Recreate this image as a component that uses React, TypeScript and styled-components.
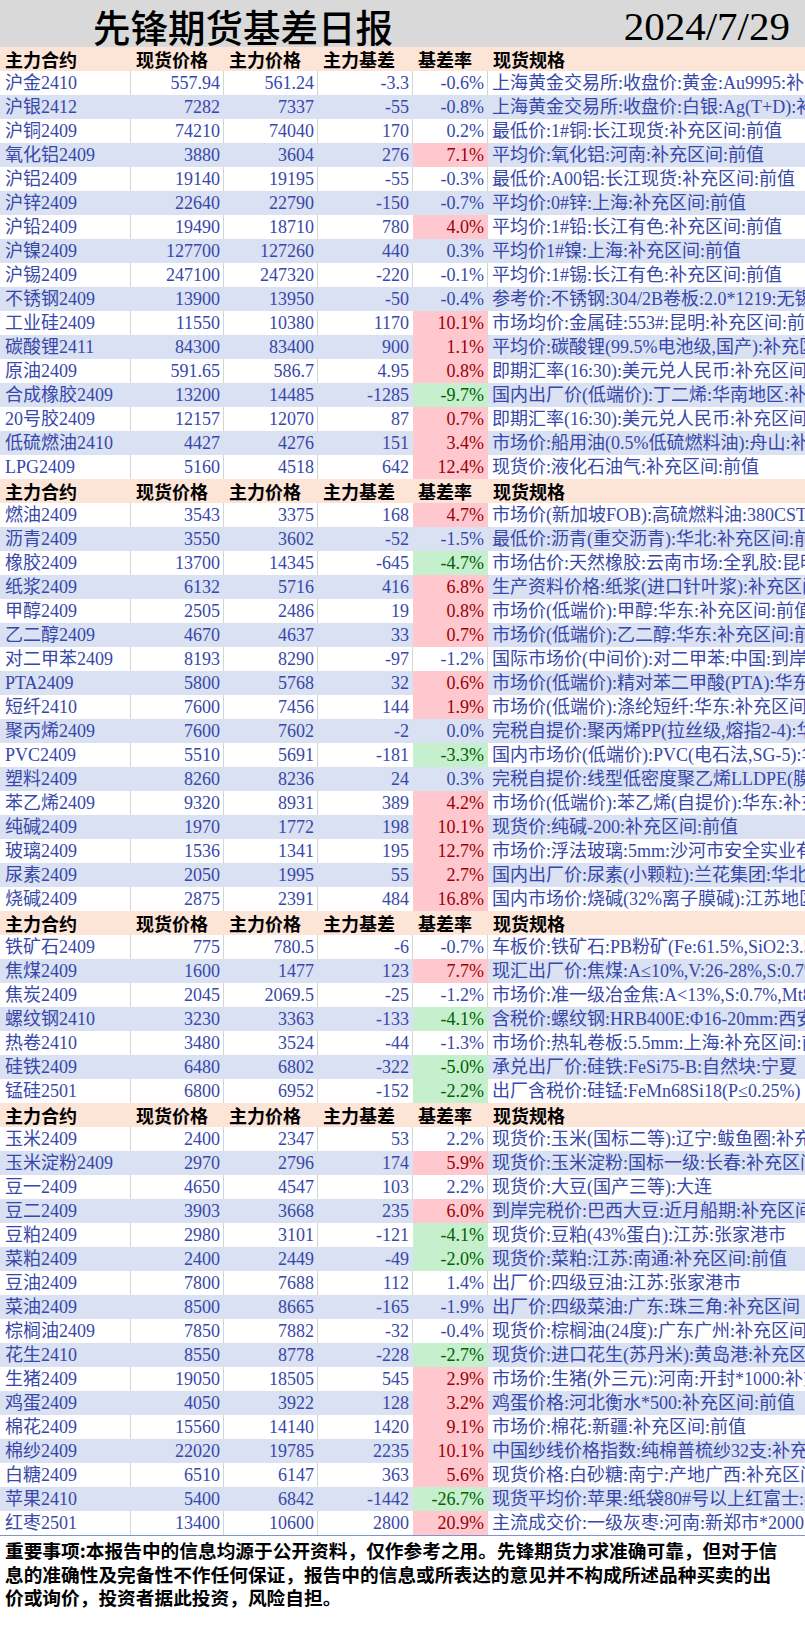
import React from 'react';
import styled, { createGlobalStyle } from 'styled-components';

const GlobalStyle = createGlobalStyle`
  html, body {
    margin: 0;
    padding: 0;
    background: #ffffff;
  }
`;

type Mark = 'up' | 'down' | '';
type Row = [string, string, string, string, string, Mark, string];

const GROUPS: Row[][] = [
  [
    ['沪金2410', '557.94', '561.24', '-3.3', '-0.6%', '', '上海黄金交易所:收盘价:黄金:Au9995:补充区间:前值'],
    ['沪银2412', '7282', '7337', '-55', '-0.8%', '', '上海黄金交易所:收盘价:白银:Ag(T+D):补充区间:前值'],
    ['沪铜2409', '74210', '74040', '170', '0.2%', '', '最低价:1#铜:长江现货:补充区间:前值'],
    ['氧化铝2409', '3880', '3604', '276', '7.1%', 'up', '平均价:氧化铝:河南:补充区间:前值'],
    ['沪铝2409', '19140', '19195', '-55', '-0.3%', '', '最低价:A00铝:长江现货:补充区间:前值'],
    ['沪锌2409', '22640', '22790', '-150', '-0.7%', '', '平均价:0#锌:上海:补充区间:前值'],
    ['沪铅2409', '19490', '18710', '780', '4.0%', 'up', '平均价:1#铅:长江有色:补充区间:前值'],
    ['沪镍2409', '127700', '127260', '440', '0.3%', '', '平均价1#镍:上海:补充区间:前值'],
    ['沪锡2409', '247100', '247320', '-220', '-0.1%', '', '平均价:1#锡:长江有色:补充区间:前值'],
    ['不锈钢2409', '13900', '13950', '-50', '-0.4%', '', '参考价:不锈钢:304/2B卷板:2.0*1219:无锡:补充区间'],
    ['工业硅2409', '11550', '10380', '1170', '10.1%', 'up', '市场均价:金属硅:553#:昆明:补充区间:前值'],
    ['碳酸锂2411', '84300', '83400', '900', '1.1%', 'up', '平均价:碳酸锂(99.5%电池级,国产):补充区间:前值'],
    ['原油2409', '591.65', '586.7', '4.95', '0.8%', 'up', '即期汇率(16:30):美元兑人民币:补充区间:前值'],
    ['合成橡胶2409', '13200', '14485', '-1285', '-9.7%', 'down', '国内出厂价(低端价):丁二烯:华南地区:补充区间'],
    ['20号胶2409', '12157', '12070', '87', '0.7%', 'up', '即期汇率(16:30):美元兑人民币:补充区间:前值'],
    ['低硫燃油2410', '4427', '4276', '151', '3.4%', 'up', '市场价:船用油(0.5%低硫燃料油):舟山:补充区间'],
    ['LPG2409', '5160', '4518', '642', '12.4%', 'up', '现货价:液化石油气:补充区间:前值'],
  ],
  [
    ['燃油2409', '3543', '3375', '168', '4.7%', 'up', '市场价(新加坡FOB):高硫燃料油:380CST:补充区间'],
    ['沥青2409', '3550', '3602', '-52', '-1.5%', '', '最低价:沥青(重交沥青):华北:补充区间:前值'],
    ['橡胶2409', '13700', '14345', '-645', '-4.7%', 'down', '市场估价:天然橡胶:云南市场:全乳胶:昆明'],
    ['纸浆2409', '6132', '5716', '416', '6.8%', 'up', '生产资料价格:纸浆(进口针叶浆):补充区间:前值'],
    ['甲醇2409', '2505', '2486', '19', '0.8%', 'up', '市场价(低端价):甲醇:华东:补充区间:前值'],
    ['乙二醇2409', '4670', '4637', '33', '0.7%', 'up', '市场价(低端价):乙二醇:华东:补充区间:前值'],
    ['对二甲苯2409', '8193', '8290', '-97', '-1.2%', '', '国际市场价(中间价):对二甲苯:中国:到岸价'],
    ['PTA2409', '5800', '5768', '32', '0.6%', 'up', '市场价(低端价):精对苯二甲酸(PTA):华东'],
    ['短纤2410', '7600', '7456', '144', '1.9%', 'up', '市场价(低端价):涤纶短纤:华东:补充区间'],
    ['聚丙烯2409', '7600', '7602', '-2', '0.0%', '', '完税自提价:聚丙烯PP(拉丝级,熔指2-4):华东'],
    ['PVC2409', '5510', '5691', '-181', '-3.3%', 'down', '国内市场价(低端价):PVC(电石法,SG-5):华东'],
    ['塑料2409', '8260', '8236', '24', '0.3%', '', '完税自提价:线型低密度聚乙烯LLDPE(膜级)'],
    ['苯乙烯2409', '9320', '8931', '389', '4.2%', 'up', '市场价(低端价):苯乙烯(自提价):华东:补充区间'],
    ['纯碱2409', '1970', '1772', '198', '10.1%', 'up', '现货价:纯碱-200:补充区间:前值'],
    ['玻璃2409', '1536', '1341', '195', '12.7%', 'up', '市场价:浮法玻璃:5mm:沙河市安全实业有限公司'],
    ['尿素2409', '2050', '1995', '55', '2.7%', 'up', '国内出厂价:尿素(小颗粒):兰花集团:华北'],
    ['烧碱2409', '2875', '2391', '484', '16.8%', 'up', '国内市场价:烧碱(32%离子膜碱):江苏地区'],
  ],
  [
    ['铁矿石2409', '775', '780.5', '-6', '-0.7%', '', '车板价:铁矿石:PB粉矿(Fe:61.5%,SiO2:3.5%)'],
    ['焦煤2409', '1600', '1477', '123', '7.7%', 'up', '现汇出厂价:焦煤:A≤10%,V:26-28%,S:0.7%'],
    ['焦炭2409', '2045', '2069.5', '-25', '-1.2%', '', '市场价:准一级冶金焦:A<13%,S:0.7%,Mt8%'],
    ['螺纹钢2410', '3230', '3363', '-133', '-4.1%', 'down', '含税价:螺纹钢:HRB400E:Φ16-20mm:西安'],
    ['热卷2410', '3480', '3524', '-44', '-1.3%', '', '市场价:热轧卷板:5.5mm:上海:补充区间:前值'],
    ['硅铁2409', '6480', '6802', '-322', '-5.0%', 'down', '承兑出厂价:硅铁:FeSi75-B:自然块:宁夏'],
    ['锰硅2501', '6800', '6952', '-152', '-2.2%', 'down', '出厂含税价:硅锰:FeMn68Si18(P≤0.25%)'],
  ],
  [
    ['玉米2409', '2400', '2347', '53', '2.2%', '', '现货价:玉米(国标二等):辽宁:鲅鱼圈:补充区间'],
    ['玉米淀粉2409', '2970', '2796', '174', '5.9%', 'up', '现货价:玉米淀粉:国标一级:长春:补充区间'],
    ['豆一2409', '4650', '4547', '103', '2.2%', '', '现货价:大豆(国产三等):大连'],
    ['豆二2409', '3903', '3668', '235', '6.0%', 'up', '到岸完税价:巴西大豆:近月船期:补充区间'],
    ['豆粕2409', '2980', '3101', '-121', '-4.1%', 'down', '现货价:豆粕(43%蛋白):江苏:张家港市'],
    ['菜粕2409', '2400', '2449', '-49', '-2.0%', 'down', '现货价:菜粕:江苏:南通:补充区间:前值'],
    ['豆油2409', '7800', '7688', '112', '1.4%', '', '出厂价:四级豆油:江苏:张家港市'],
    ['菜油2409', '8500', '8665', '-165', '-1.9%', '', '出厂价:四级菜油:广东:珠三角:补充区间'],
    ['棕榈油2409', '7850', '7882', '-32', '-0.4%', '', '现货价:棕榈油(24度):广东广州:补充区间'],
    ['花生2410', '8550', '8778', '-228', '-2.7%', 'down', '现货价:进口花生(苏丹米):黄岛港:补充区间'],
    ['生猪2409', '19050', '18505', '545', '2.9%', 'up', '市场价:生猪(外三元):河南:开封*1000:补充区间'],
    ['鸡蛋2409', '4050', '3922', '128', '3.2%', 'up', '鸡蛋价格:河北衡水*500:补充区间:前值'],
    ['棉花2409', '15560', '14140', '1420', '9.1%', 'up', '市场价:棉花:新疆:补充区间:前值'],
    ['棉纱2409', '22020', '19785', '2235', '10.1%', 'up', '中国纱线价格指数:纯棉普梳纱32支:补充区间'],
    ['白糖2409', '6510', '6147', '363', '5.6%', 'up', '现货价格:白砂糖:南宁:产地广西:补充区间'],
    ['苹果2410', '5400', '6842', '-1442', '-26.7%', 'down', '现货平均价:苹果:纸袋80#号以上红富士:栖霞'],
    ['红枣2501', '13400', '10600', '2800', '20.9%', 'up', '主流成交价:一级灰枣:河南:新郑市*2000:补充区间'],
  ],
];

const HEADS = ['主力合约', '现货价格', '主力价格', '主力基差', '基差率', '现货规格'];

const GRID_LINE = '#d4d4d4';

const Page = styled.div`
  width: 805px;
  background: #ffffff;
`;

const TitleBar = styled.div`
  height: 47px;
  background: #d9d9d9;
  display: flex;
  align-items: center;
  justify-content: space-between;
  padding: 5px 15px 0 93px;
  box-sizing: border-box;
`;

const Title = styled.h1`
  margin: 0;
  font-family: 'Noto Sans CJK SC', sans-serif;
  font-weight: 500;
  font-size: 37.5px;
  line-height: 42px;
  color: #000000;
`;

const DateText = styled.div`
  font-family: 'Liberation Serif', serif;
  font-size: 41px;
  line-height: 42px;
  color: #000000;
`;

const Table = styled.div`
  border-bottom: 1px solid #8096c8;
`;

const Row = styled.div<{ $tone: 'white' | 'blue' | 'head' }>`
  display: grid;
  grid-template-columns: 131px 93px 94px 95px 75px 317px;
  height: 24px;
  background: ${(p) => (p.$tone === 'blue' ? '#d9e1f2' : p.$tone === 'head' ? '#fce4d6' : '#ffffff')};
`;

const HeadCell = styled.div`
  padding-left: 5px;
  font-family: 'Noto Sans CJK SC', sans-serif;
  font-weight: 700;
  font-size: 18px;
  line-height: 24px;
  color: #000000;
  white-space: nowrap;
  overflow: hidden;
`;

const Cell = styled.div<{ $right?: boolean; $line: string }>`
  box-sizing: border-box;
  height: 24px;
  padding: ${(p) => (p.$right ? '0 3px 0 0' : '0 0 0 5px')};
  text-align: ${(p) => (p.$right ? 'right' : 'left')};
  border-right: 1px solid ${(p) => p.$line};
  font-family: 'Liberation Serif', 'Noto Sans CJK SC', serif;
  font-size: 18px;
  line-height: 24px;
  color: #3848aa;
  white-space: nowrap;
  overflow: hidden;
`;

const RateCell = styled(Cell)<{ $mark: Mark }>`
  background: ${(p) => (p.$mark === 'up' ? '#ffc7ce' : p.$mark === 'down' ? '#c6efce' : 'transparent')};
  color: ${(p) => (p.$mark === 'up' ? '#9c0006' : p.$mark === 'down' ? '#006100' : '#3848aa')};
  border-right-color: ${(p) => (p.$mark === 'up' ? '#ffc7ce' : p.$mark === 'down' ? '#c6efce' : p.$line)};
`;

const SpecCell = styled.div`
  padding-left: 4px;
  font-family: 'Liberation Serif', 'Noto Sans CJK SC', serif;
  font-size: 18px;
  line-height: 24px;
  color: #3848aa;
  white-space: nowrap;
  overflow: hidden;
`;

const Footer = styled.div`
  padding: 2px 0 0 5px;
  height: 96px;
  box-sizing: border-box;
`;

const FootLine = styled.div`
  font-family: 'Noto Sans CJK SC', sans-serif;
  font-weight: 700;
  font-size: 18.7px;
  line-height: 23.5px;
  color: #000000;
  white-space: nowrap;
`;

function HeaderRow() {
  return (
    <Row $tone="head">
      {HEADS.map((h) => (
        <HeadCell key={h}>{h}</HeadCell>
      ))}
    </Row>
  );
}

function DataRow({ row, tone }: { row: Row; tone: 'white' | 'blue' }) {
  const [name, spot, fut, basis, rate, mark, spec] = row;
  const line = tone === 'white' ? GRID_LINE : 'transparent';
  return (
    <Row $tone={tone}>
      <Cell $line={line}>{name}</Cell>
      <Cell $right $line={line}>{spot}</Cell>
      <Cell $right $line={line}>{fut}</Cell>
      <Cell $right $line={mark ? 'transparent' : line}>{basis}</Cell>
      <RateCell $right $line={line} $mark={mark}>{rate}</RateCell>
      <SpecCell>{spec}</SpecCell>
    </Row>
  );
}

export default function App() {
  return (
    <Page>
      <GlobalStyle />
      <TitleBar>
        <Title>先锋期货基差日报</Title>
        <DateText>2024/7/29</DateText>
      </TitleBar>
      <Table>
        {GROUPS.map((group, gi) => (
          <React.Fragment key={gi}>
            <HeaderRow />
            {group.map((row, ri) => (
              <DataRow key={row[0]} row={row} tone={ri % 2 === 0 ? 'white' : 'blue'} />
            ))}
          </React.Fragment>
        ))}
      </Table>
      <Footer>
        <FootLine>重要事项:本报告中的信息均源于公开资料，仅作参考之用。先锋期货力求准确可靠，但对于信</FootLine>
        <FootLine>息的准确性及完备性不作任何保证，报告中的信息或所表达的意见并不构成所述品种买卖的出</FootLine>
        <FootLine>价或询价，投资者据此投资，风险自担。</FootLine>
      </Footer>
    </Page>
  );
}
